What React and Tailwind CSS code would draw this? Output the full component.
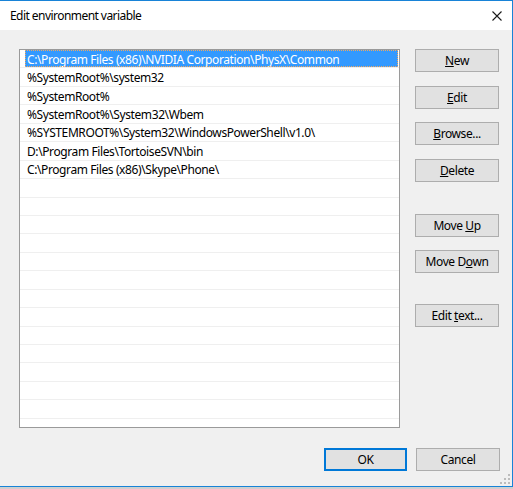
import React from "react";

const paths = [
  "C:\\Program Files (x86)\\NVIDIA Corporation\\PhysX\\Common",
  "%SystemRoot%\\system32",
  "%SystemRoot%",
  "%SystemRoot%\\System32\\Wbem",
  "%SYSTEMROOT%\\System32\\WindowsPowerShell\\v1.0\\",
  "D:\\Program Files\\TortoiseSVN\\bin",
  "C:\\Program Files (x86)\\Skype\\Phone\\",
];

function Btn({ children, className = "", primary = false }) {
  return (
    <div
      className={
        "h-[23px] flex items-center justify-center bg-[#e1e1e1] text-[12px] text-black leading-none " +
        (primary ? "border-2 border-[#0078d7] " : "border border-[#adadad] ") +
        className
      }
    >
      {children}
    </div>
  );
}

export default function App() {
  const rows = Array.from({ length: 21 }, (_, i) => paths[i] ?? "");
  return (
    <div className="w-[513px] h-[489px] bg-[#cfcfcf] font-['Noto_Sans',sans-serif] tracking-[-0.4px] overflow-hidden">
      <div className="w-[513px] h-[487px] flex flex-col border-t border-r border-b border-[#1883d7] bg-[#f0f0f0]">
        {/* Title bar */}
        <div className="h-[29px] bg-white flex items-center justify-between pl-[10px] pr-[9px] shrink-0">
          <span className="text-[12px] text-black leading-none tracking-[-0.55px] pt-[1px]">Edit environment variable</span>
          <svg width="10" height="10" viewBox="0 0 10 10" className="mr-[1px]">
            <path d="M0.5 0.5 L9.5 9.5 M9.5 0.5 L0.5 9.5" stroke="#1a1a1a" strokeWidth="1.1" />
          </svg>
        </div>
        {/* Body */}
        <div className="relative flex-1 flex flex-col pl-[19px] pr-[12px] pt-[19px]">
          <div className="flex">
            {/* List */}
            <div className="w-[381px] h-[379px] border border-[#9a9a9a] bg-white overflow-hidden">
              {rows.map((p, i) => (
                <div key={i} className="relative h-[18.45px] border-b border-[#efefef] text-[12px] leading-none">
                  {i === 0 ? (
                    <div className="absolute left-[5px] right-[1px] top-0 bottom-0 bg-[#3399ff] outline outline-1 outline-dotted outline-offset-[-1px] outline-[#f0a860] flex items-center pl-[2px] pt-[2px] text-white whitespace-nowrap">
                      {p}
                    </div>
                  ) : (
                    <div className="absolute left-[5px] right-[1px] top-0 bottom-0 flex items-center pl-[2px] pt-[2px] text-black whitespace-nowrap">
                      {p}
                    </div>
                  )}
                </div>
              ))}
            </div>
            {/* Buttons */}
            <div className="ml-[15px] w-[84px] flex flex-col">
              <Btn><span><u>N</u>ew</span></Btn>
              <Btn className="mt-[14px]"><span><u>E</u>dit</span></Btn>
              <Btn className="mt-[13px]"><span><u>B</u>rowse...</span></Btn>
              <Btn className="mt-[14px]"><span><u>D</u>elete</span></Btn>
              <Btn className="mt-[32px]"><span>Move <u>U</u>p</span></Btn>
              <Btn className="mt-[13px]"><span>Move D<u>o</u>wn</span></Btn>
              <Btn className="mt-[31px]"><span>Edit <u>t</u>ext...</span></Btn>
            </div>
          </div>
          <div className="mt-[20px] flex justify-end gap-[9px]">
            <Btn primary className="w-[83px]">OK</Btn>
            <Btn className="w-[84px]">Cancel</Btn>
          </div>
          <svg width="10" height="10" viewBox="0 0 10 10" className="absolute right-[2px] bottom-[2px]">
            <rect x="8" y="0" width="2" height="2" fill="#bcbcbc" />
            <rect x="4" y="4" width="2" height="2" fill="#bcbcbc" />
            <rect x="8" y="4" width="2" height="2" fill="#bcbcbc" />
            <rect x="0" y="8" width="2" height="2" fill="#bcbcbc" />
            <rect x="4" y="8" width="2" height="2" fill="#bcbcbc" />
            <rect x="8" y="8" width="2" height="2" fill="#bcbcbc" />
          </svg>
        </div>
      </div>
    </div>
  );
}
